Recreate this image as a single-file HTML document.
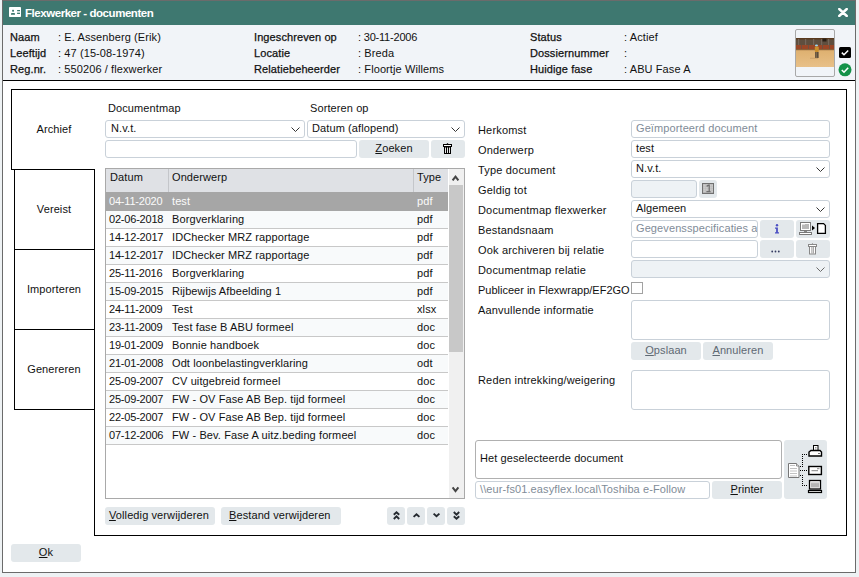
<!DOCTYPE html>
<html><head><meta charset="utf-8">
<style>
*{box-sizing:border-box;margin:0;padding:0}
html,body{width:859px;height:577px;overflow:hidden;background:#eef2f4;font-family:"Liberation Sans",sans-serif;font-size:11px;color:#111;letter-spacing:0.1px}
.a{position:absolute}
.t{position:absolute;line-height:13px;white-space:nowrap}
.m{-webkit-text-stroke:0.25px #111}
.bl{position:absolute;background:#000}
.inp{position:absolute;background:#fff;border:1px solid #c9d1d9;border-radius:3px}
.dis{background:#eef2f5}
.btn{position:absolute;background:#e3e8eb;border-radius:3px}
.u{text-decoration:underline;text-underline-offset:1px}
.row{position:absolute;left:106px;width:342px;height:18px;border-bottom:1px solid #c8c8c8}
.row.o{background:#f8fafb}
.row.sel{background:#a6a6a6;color:#fbfbfb;border-bottom:none;height:19px}
.row.sel span{top:3px}
.row span{position:absolute;top:2px;line-height:13px;white-space:nowrap}
.d{left:3px;letter-spacing:-0.2px}
.s{left:66px}
.ty{left:311px}
.lab{position:absolute;left:478px;letter-spacing:0.18px;line-height:13px;white-space:nowrap}
</style></head><body>
<!-- window -->
<div class="a" style="left:2px;top:0;width:854px;height:573px;background:#fff;border:1px solid #6b6b6b;border-width:1px 1px 1px 1px"></div>
<!-- title bar -->
<div class="a" style="left:3px;top:1px;width:852px;height:24px;background:#3e7870"></div>
<svg class="a" style="left:9px;top:7px" width="12" height="10" viewBox="0 0 12 10">
<rect x="0" y="0" width="12" height="10" rx="0.8" fill="#fff"/>
<rect x="3.1" y="2.8" width="1.9" height="1.9" rx="0.6" fill="#3e7870"/>
<path d="M2 7.8 V6.9 Q2 6.1 2.8 6.1 H5.2 Q6 6.1 6 6.9 V7.8 Z" fill="#3e7870"/>
<rect x="8.1" y="3" width="2.9" height="1" fill="#3e7870"/>
<rect x="8.1" y="4.5" width="2.9" height="1.2" fill="#3e7870" opacity=".45"/>
<rect x="8.1" y="6" width="2.9" height="1" fill="#3e7870"/>
</svg>
<div class="t" style="left:25px;top:7px;color:#fff;font-weight:bold;font-size:11.5px;letter-spacing:-0.45px">Flexwerker - documenten</div>
<svg class="a" style="left:838px;top:8px" width="10" height="9" viewBox="0 0 10 9">
<path d="M1.2 1 L8.8 8 M8.8 1 L1.2 8" stroke="#fff" stroke-width="2.4" stroke-linecap="round"/>
</svg>
<!-- header -->
<div class="a" style="left:3px;top:25px;width:852px;height:55px;background:#f1f4f8"></div>
<div class="bl" style="left:3px;top:80px;width:852px;height:1px"></div>

<div class="t m" style="left:10px;top:31px">Naam</div>
<div class="t m" style="left:10px;top:47px">Leeftijd</div>
<div class="t m" style="left:10px;top:63px">Reg.nr.</div>
<div class="t" style="left:58px;top:31px">: E. Assenberg (Erik)</div>
<div class="t" style="left:58px;top:47px">: 47 (15-08-1974)</div>
<div class="t" style="left:58px;top:63px">: 550206 / flexwerker</div>

<div class="t m" style="left:254px;top:31px">Ingeschreven op</div>
<div class="t m" style="left:254px;top:47px">Locatie</div>
<div class="t m" style="left:254px;top:63px">Relatiebeheerder</div>
<div class="t" style="left:358px;top:31px;letter-spacing:-0.2px">: 30-11-2006</div>
<div class="t" style="left:358px;top:47px">: Breda</div>
<div class="t" style="left:358px;top:63px">: Floortje Willems</div>

<div class="t m" style="left:530px;top:31px">Status</div>
<div class="t m" style="left:530px;top:47px">Dossiernummer</div>
<div class="t m" style="left:530px;top:63px">Huidige fase</div>
<div class="t" style="left:624px;top:31px">: Actief</div>
<div class="t" style="left:624px;top:47px">:</div>
<div class="t" style="left:624px;top:63px">: ABU Fase A</div>

<!-- photo -->
<div class="a" style="left:795px;top:29px;width:40px;height:48px;border:1px solid #a8a8a8;border-radius:2px;background:#f1f4f8"></div>
<svg class="a" style="left:796px;top:38px" width="38" height="29" viewBox="0 0 38 29">
<defs><linearGradient id="fl" x1="0" y1="0" x2="0" y2="1"><stop offset="0" stop-color="#d6a55e"/><stop offset="1" stop-color="#e8c088"/></linearGradient></defs>
<rect width="38" height="29" fill="url(#fl)"/>
<rect width="38" height="12" fill="#5f4e3e"/>
<rect y="0" width="38" height="1.5" fill="#5a3a1e"/>
<rect x="2" y="1" width="1.2" height="7" fill="#75665a"/>
<rect x="9" y="1" width="1.2" height="7" fill="#75665a"/>
<rect x="17" y="1" width="1.2" height="7" fill="#75665a"/>
<rect x="25" y="1" width="1.2" height="7" fill="#75665a"/>
<rect x="32" y="1" width="1.2" height="7" fill="#75665a"/>
<rect x="26.5" y="0.5" width="4" height="3" fill="#2a1e14"/>
<rect y="7" width="38" height="4" fill="#9a4626"/>
<rect x="5" y="7" width="1" height="4" fill="#6e5040"/>
<rect x="12" y="7" width="1" height="4" fill="#6e5040"/>
<rect x="19" y="7" width="1" height="4" fill="#6e5040"/>
<rect x="26" y="7" width="1" height="4" fill="#6e5040"/>
<rect x="33" y="7" width="1" height="4" fill="#6e5040"/>
<rect y="11" width="38" height="1.2" fill="#8a6038"/>
<ellipse cx="20.5" cy="7.5" rx="1.5" ry="1" fill="#9fd6f0"/>
<rect x="18.8" y="8.5" width="4" height="5.5" rx="1" fill="#c98e2e"/>
<rect x="19.3" y="14" width="1.3" height="6" fill="#3a332c"/>
<rect x="21.2" y="14" width="1.3" height="6" fill="#3a332c"/>
<rect x="14" y="19.8" width="8" height="0.8" fill="#b08a58" opacity=".6"/>
</svg>
<svg class="a" style="left:839px;top:47px" width="12" height="11" viewBox="0 0 12 11">
<rect width="12" height="11" rx="1.5" fill="#000"/>
<path d="M2.8 5.6 L5 7.8 L9.2 3.4" stroke="#fff" stroke-width="1.5" fill="none"/>
</svg>
<svg class="a" style="left:838px;top:63px" width="14" height="14" viewBox="0 0 14 14">
<circle cx="7" cy="6.8" r="6.5" fill="#149249"/>
<path d="M3.8 7 L6 9.2 L10.2 4.8" stroke="#fff" stroke-width="1.6" fill="none"/>
</svg>

<!-- tab panel -->
<div class="bl" style="left:11px;top:89px;width:836px;height:1px"></div>
<div class="bl" style="left:846px;top:89px;width:1px;height:447px"></div>
<div class="bl" style="left:94px;top:535px;width:753px;height:1px"></div>
<div class="bl" style="left:94px;top:409px;width:1px;height:127px"></div>
<div class="bl" style="left:11px;top:89px;width:1px;height:81px"></div>
<div class="bl" style="left:11px;top:169px;width:84px;height:1px"></div>
<div class="a" style="left:14px;top:169px;width:81px;height:81px;border:1px solid #000"></div>
<div class="a" style="left:14px;top:249px;width:81px;height:81px;border:1px solid #000"></div>
<div class="a" style="left:14px;top:329px;width:81px;height:81px;border:1px solid #000"></div>
<div class="t" style="left:14px;width:80px;text-align:center;top:123px">Archief</div>
<div class="t" style="left:14px;width:80px;text-align:center;top:203px">Vereist</div>
<div class="t" style="left:14px;width:80px;text-align:center;top:283px">Importeren</div>
<div class="t" style="left:14px;width:80px;text-align:center;top:363px">Genereren</div>

<!-- left content -->
<div class="t" style="left:108px;top:102px">Documentmap</div>
<div class="t" style="left:310px;top:102px">Sorteren op</div>
<div class="inp" style="left:105px;top:120px;width:200px;height:18px"></div>
<div class="t" style="left:111px;top:122px">N.v.t.</div>
<svg class="a" style="left:291px;top:127px" width="9" height="5" viewBox="0 0 9 5"><path d="M0.5 0.5 L4.5 4.5 L8.5 0.5" stroke="#333" stroke-width="1" fill="none"/></svg>
<div class="inp" style="left:307px;top:120px;width:158px;height:18px"></div>
<div class="t" style="left:312px;top:122px">Datum (aflopend)</div>
<svg class="a" style="left:451px;top:127px" width="9" height="5" viewBox="0 0 9 5"><path d="M0.5 0.5 L4.5 4.5 L8.5 0.5" stroke="#333" stroke-width="1" fill="none"/></svg>
<div class="inp" style="left:105px;top:140px;width:252px;height:18px"></div>
<div class="btn" style="left:359px;top:140px;width:70px;height:18px"></div>
<div class="t" style="left:359px;width:70px;text-align:center;top:142px"><span class="u">Z</span>oeken</div>
<div class="btn" style="left:431px;top:140px;width:34px;height:18px"></div>
<svg class="a" style="left:443px;top:143px" width="9" height="11" viewBox="0 0 9 11">
<path d="M3.5 1 L4.5 0 L5.5 1 Z" fill="#000"/>
<rect x="0" y="1" width="9" height="3" fill="#000"/>
<rect x="1" y="2" width="7" height="1" fill="#fff"/>
<rect x="1" y="4" width="7" height="7" fill="#000"/>
<rect x="2" y="4.5" width="0.9" height="5.5" fill="#fff"/>
<rect x="4" y="4.5" width="0.9" height="5.5" fill="#fff"/>
<rect x="6" y="4.5" width="0.9" height="5.5" fill="#fff"/>
</svg>

<!-- table -->
<div class="a" style="left:105px;top:168px;width:360px;height:331px;border:1px solid #a9a9a9;background:#fff"></div>
<div class="a" style="left:106px;top:169px;width:342px;height:23px;background:#dfe1e5"></div>
<div class="a" style="left:168px;top:169px;width:1px;height:23px;background:#c4c6ca"></div>
<div class="a" style="left:413px;top:169px;width:1px;height:23px;background:#c4c6ca"></div>
<div class="t" style="left:110px;top:171px">Datum</div>
<div class="t" style="left:172px;top:171px">Onderwerp</div>
<div class="t" style="left:417px;top:171px">Type</div>
<!-- scrollbar -->
<div class="a" style="left:449px;top:169px;width:15px;height:329px;background:#f0f0f0"></div>
<div class="a" style="left:449px;top:185px;width:14px;height:167px;background:#c8c8c8"></div>
<svg class="a" style="left:451px;top:174px" width="9" height="8" viewBox="0 0 9 8"><path d="M1.6 6.4 L4.5 2.6 L7.4 6.4" stroke="#444" stroke-width="2" fill="none"/></svg>
<svg class="a" style="left:451px;top:486px" width="9" height="8" viewBox="0 0 9 8"><path d="M1.6 1.4 L4.5 5.2 L7.4 1.4" stroke="#444" stroke-width="2" fill="none"/></svg>

<div class="row sel" style="top:192px"><span class="d">04-11-2020</span><span class="s">test</span><span class="ty">pdf</span></div>
<div class="row o" style="top:211px"><span class="d">02-06-2018</span><span class="s">Borgverklaring</span><span class="ty">pdf</span></div>
<div class="row" style="top:229px"><span class="d">14-12-2017</span><span class="s">IDChecker MRZ rapportage</span><span class="ty">pdf</span></div>
<div class="row o" style="top:247px"><span class="d">14-12-2017</span><span class="s">IDChecker MRZ rapportage</span><span class="ty">pdf</span></div>
<div class="row" style="top:265px"><span class="d">25-11-2016</span><span class="s">Borgverklaring</span><span class="ty">pdf</span></div>
<div class="row o" style="top:283px"><span class="d">15-09-2015</span><span class="s">Rijbewijs Afbeelding 1</span><span class="ty">pdf</span></div>
<div class="row" style="top:301px"><span class="d">24-11-2009</span><span class="s">Test</span><span class="ty">xlsx</span></div>
<div class="row o" style="top:319px"><span class="d">23-11-2009</span><span class="s">Test fase B ABU formeel</span><span class="ty">doc</span></div>
<div class="row" style="top:337px"><span class="d">19-01-2009</span><span class="s">Bonnie handboek</span><span class="ty">doc</span></div>
<div class="row o" style="top:355px"><span class="d">21-01-2008</span><span class="s">Odt loonbelastingverklaring</span><span class="ty">odt</span></div>
<div class="row" style="top:373px"><span class="d">25-09-2007</span><span class="s">CV uitgebreid formeel</span><span class="ty">doc</span></div>
<div class="row o" style="top:391px"><span class="d">25-09-2007</span><span class="s">FW - OV Fase AB Bep. tijd formeel</span><span class="ty">doc</span></div>
<div class="row" style="top:409px"><span class="d">22-05-2007</span><span class="s">FW - OV Fase AB Bep. tijd formeel</span><span class="ty">doc</span></div>
<div class="row o" style="top:427px"><span class="d">07-12-2006</span><span class="s">FW - Bev. Fase A uitz.beding formeel</span><span class="ty">doc</span></div>

<!-- bottom buttons -->
<div class="btn" style="left:105px;top:507px;width:110px;height:18px"></div>
<div class="t" style="left:109px;top:509px"><span class="u">V</span>olledig verwijderen</div>
<div class="btn" style="left:221px;top:507px;width:120px;height:18px"></div>
<div class="t" style="left:229px;top:509px"><span class="u">B</span>estand verwijderen</div>
<div class="btn" style="left:387px;top:507px;width:18px;height:18px"></div>
<div class="btn" style="left:407px;top:507px;width:18px;height:18px"></div>
<div class="btn" style="left:427px;top:507px;width:18px;height:18px"></div>
<div class="btn" style="left:447px;top:507px;width:18px;height:18px"></div>
<svg class="a" style="left:392px;top:510px" width="9" height="11" viewBox="0 0 9 11"><path d="M1.8 4.8 L4.5 2.2 L7.2 4.8 M1.8 9 L4.5 6.4 L7.2 9" stroke="#252a30" stroke-width="1.9" fill="none"/></svg>
<svg class="a" style="left:412px;top:512px" width="9" height="7" viewBox="0 0 9 7"><path d="M1.6 4.9 L4.5 2.2 L7.4 4.9" stroke="#252a30" stroke-width="1.9" fill="none"/></svg>
<svg class="a" style="left:432px;top:512px" width="9" height="7" viewBox="0 0 9 7"><path d="M1.6 1.6 L4.5 4.3 L7.4 1.6" stroke="#252a30" stroke-width="1.9" fill="none"/></svg>
<svg class="a" style="left:452px;top:510px" width="9" height="11" viewBox="0 0 9 11"><path d="M1.8 2 L4.5 4.6 L7.2 2 M1.8 6.2 L4.5 8.8 L7.2 6.2" stroke="#252a30" stroke-width="1.9" fill="none"/></svg>

<!-- right form labels -->
<div class="lab" style="top:124px">Herkomst</div>
<div class="lab" style="top:144px">Onderwerp</div>
<div class="lab" style="top:164px">Type document</div>
<div class="lab" style="top:184px">Geldig tot</div>
<div class="lab" style="top:204px">Documentmap flexwerker</div>
<div class="lab" style="top:224px">Bestandsnaam</div>
<div class="lab" style="top:244px">Ook archiveren bij relatie</div>
<div class="lab" style="top:264px">Documentmap relatie</div>
<div class="lab" style="top:284px;letter-spacing:0">Publiceer in Flexwrapp/EF2GO</div>
<div class="lab" style="top:304px">Aanvullende informatie</div>
<div class="lab" style="top:374px">Reden intrekking/weigering</div>

<!-- right form inputs -->
<div class="inp" style="left:631px;top:120px;width:199px;height:18px"></div>
<div class="t" style="left:636px;top:122px;color:#7f8c98">Geïmporteerd document</div>
<div class="inp" style="left:631px;top:140px;width:199px;height:18px"></div>
<div class="t" style="left:636px;top:142px">test</div>
<div class="inp" style="left:631px;top:160px;width:199px;height:18px"></div>
<div class="t" style="left:636px;top:162px">N.v.t.</div>
<svg class="a" style="left:816px;top:167px" width="9" height="5" viewBox="0 0 9 5"><path d="M0.5 0.5 L4.5 4.5 L8.5 0.5" stroke="#333" stroke-width="1" fill="none"/></svg>
<div class="inp dis" style="left:631px;top:180px;width:66px;height:18px"></div>
<div class="btn" style="left:699px;top:180px;width:18px;height:18px"></div>
<svg class="a" style="left:702px;top:183px" width="12" height="11" viewBox="0 0 12 11">
<rect x="0.5" y="0.5" width="11" height="10" fill="#b4b4b4" stroke="#707070" stroke-width="1"/>
<rect x="1.6" y="1.6" width="1" height="1" fill="#fff" opacity=".85"/><rect x="3.6" y="1.6" width="1" height="1" fill="#fff" opacity=".85"/><rect x="5.6" y="1.6" width="1" height="1" fill="#fff" opacity=".85"/><rect x="7.6" y="1.6" width="1" height="1" fill="#fff" opacity=".85"/><rect x="9.6" y="1.6" width="1" height="1" fill="#fff" opacity=".85"/><rect x="1.6" y="3.6" width="1" height="1" fill="#fff" opacity=".85"/><rect x="3.6" y="3.6" width="1" height="1" fill="#fff" opacity=".85"/><rect x="5.6" y="3.6" width="1" height="1" fill="#fff" opacity=".85"/><rect x="7.6" y="3.6" width="1" height="1" fill="#fff" opacity=".85"/><rect x="9.6" y="3.6" width="1" height="1" fill="#fff" opacity=".85"/><rect x="1.6" y="5.6" width="1" height="1" fill="#fff" opacity=".85"/><rect x="3.6" y="5.6" width="1" height="1" fill="#fff" opacity=".85"/><rect x="5.6" y="5.6" width="1" height="1" fill="#fff" opacity=".85"/><rect x="7.6" y="5.6" width="1" height="1" fill="#fff" opacity=".85"/><rect x="9.6" y="5.6" width="1" height="1" fill="#fff" opacity=".85"/><rect x="1.6" y="7.6" width="1" height="1" fill="#fff" opacity=".85"/><rect x="3.6" y="7.6" width="1" height="1" fill="#fff" opacity=".85"/><rect x="5.6" y="7.6" width="1" height="1" fill="#fff" opacity=".85"/><rect x="7.6" y="7.6" width="1" height="1" fill="#fff" opacity=".85"/><rect x="9.6" y="7.6" width="1" height="1" fill="#fff" opacity=".85"/>
<path d="M4.6 3.4 L6.4 2.2 H7.2 V8.4 M4.4 8.7 H8.6" stroke="#707070" stroke-width="1.3" fill="none"/>
</svg>
<div class="inp" style="left:631px;top:200px;width:199px;height:18px"></div>
<div class="t" style="left:636px;top:202px">Algemeen</div>
<svg class="a" style="left:816px;top:207px" width="9" height="5" viewBox="0 0 9 5"><path d="M0.5 0.5 L4.5 4.5 L8.5 0.5" stroke="#333" stroke-width="1" fill="none"/></svg>
<div class="inp" style="left:631px;top:220px;width:127px;height:18px;overflow:hidden"><div class="t" style="left:4px;top:1px;color:#7f8c98">Gegevensspecificaties a</div></div>
<div class="btn" style="left:760px;top:220px;width:34px;height:18px"></div>
<svg class="a" style="left:774px;top:224px" width="6" height="10" viewBox="0 0 6 10"><circle cx="3" cy="1.3" r="1.2" fill="#4b4fc4"/><path d="M1 3.6 H3.9 V8.2 H5 V9.4 H1 V8.2 H2.1 V4.8 H1 Z" fill="#4b4fc4"/></svg>
<div class="btn" style="left:796px;top:220px;width:34px;height:18px"></div>
<svg class="a" style="left:799px;top:222px" width="28" height="13" viewBox="0 0 28 13">
<rect x="1.5" y="0.5" width="10" height="8" fill="#fff" stroke="#7a7a7a" stroke-width="1"/>
<rect x="3" y="2" width="7" height="5" fill="#b8b8b8"/>
<rect x="3" y="2" width="3" height="1" fill="#ddd"/>
<rect x="5" y="9" width="3" height="1" fill="#888"/>
<rect x="0.5" y="10.5" width="12" height="2" fill="#fff" stroke="#7a7a7a" stroke-width="1"/>
<path d="M13 3.5 L16 6 L13 8.5 Z" fill="#000"/>
<path d="M18.6 1.6 H24.6 L26.4 3.4 V11.4 H18.6 Z" fill="#fff" stroke="#000" stroke-width="1.3"/>
</svg>
<div class="inp" style="left:631px;top:240px;width:127px;height:18px"></div>
<div class="btn" style="left:760px;top:240px;width:34px;height:18px"></div>
<svg class="a" style="left:771px;top:250px" width="9" height="3" viewBox="0 0 9 3"><circle cx="1.2" cy="1.5" r="0.9" fill="#333a60"/><circle cx="4.5" cy="1.5" r="0.9" fill="#333a60"/><circle cx="7.8" cy="1.5" r="0.9" fill="#333a60"/></svg>
<div class="btn" style="left:796px;top:240px;width:34px;height:18px"></div>
<svg class="a" style="left:808px;top:243px" width="9" height="12" viewBox="0 0 9 12">
<path d="M3.8 1 L4.5 0 L5.2 1 Z" fill="#888"/>
<rect x="0.5" y="1.5" width="8" height="2" fill="#fff" stroke="#888" stroke-width="1"/>
<rect x="1.5" y="3.5" width="6" height="7.5" fill="#fff" stroke="#888" stroke-width="1"/>
<rect x="3.5" y="4" width="0.8" height="6.5" fill="#888"/>
<rect x="4.9" y="4" width="0.8" height="6.5" fill="#888"/>
</svg>
<div class="inp dis" style="left:631px;top:260px;width:199px;height:18px"></div>
<svg class="a" style="left:816px;top:267px" width="9" height="5" viewBox="0 0 9 5"><path d="M0.5 0.5 L4.5 4.5 L8.5 0.5" stroke="#6a6a6a" stroke-width="1" fill="none"/></svg>
<div class="a" style="left:631px;top:282px;width:12px;height:12px;border:1px solid #a2a2a2;background:#fff"></div>

<div class="inp" style="left:631px;top:300px;width:199px;height:40px"></div>
<div class="btn" style="left:631px;top:342px;width:70px;height:18px"></div>
<div class="t" style="left:631px;width:70px;text-align:center;top:344px;color:#5f6973"><span class="u">O</span>pslaan</div>
<div class="btn" style="left:703px;top:342px;width:70px;height:18px"></div>
<div class="t" style="left:703px;width:70px;text-align:center;top:344px;color:#5f6973"><span class="u">A</span>nnuleren</div>
<div class="inp" style="left:631px;top:370px;width:199px;height:40px"></div>

<!-- bottom right -->
<div class="a" style="left:475px;top:440px;width:307px;height:39px;border:1px solid #b0b0b0;border-radius:3px;background:#fff"></div>
<div class="t" style="left:480px;top:452px">Het geselecteerde document</div>
<div class="inp" style="left:475px;top:481px;width:235px;height:18px"></div>
<div class="t" style="left:480px;top:483px;color:#7f8c98">\\eur-fs01.easyflex.local\Toshiba e-Follow</div>
<div class="btn" style="left:712px;top:481px;width:70px;height:18px"></div>
<div class="t" style="left:712px;width:70px;text-align:center;top:483px"><span class="u">P</span>rinter</div>
<div class="btn" style="left:784px;top:440px;width:43px;height:59px"></div>
<svg class="a" style="left:784px;top:440px" width="44" height="60" viewBox="0 0 44 60">
<path d="M4.5 23.5 H12.5 L15 26 V37.5 H4.5 Z" fill="#fff" stroke="#777" stroke-width="1"/>
<path d="M12.5 23.5 V26 H15" fill="#eee" stroke="#777" stroke-width="0.8"/>
<path d="M6 25.5 H11 M6 28.5 H13 M6 31 H13 M6 33.5 H13 M6 36 H13" stroke="#bbb" stroke-width="0.9"/>
<g fill="#000">
<rect x="18" y="14" width="1" height="1"/><rect x="18" y="16" width="1" height="1"/><rect x="18" y="18" width="1" height="1"/><rect x="18" y="20" width="1" height="1"/><rect x="18" y="22" width="1" height="1"/><rect x="18" y="24" width="1" height="1"/><rect x="18" y="26" width="1" height="1"/>
<rect x="20" y="14" width="1" height="1"/><rect x="22" y="14" width="1" height="1"/>
<rect x="16" y="26" width="1" height="1"/>
<rect x="16" y="30" width="1" height="1"/><rect x="18" y="30" width="1" height="1"/><rect x="20" y="30" width="1" height="1"/><rect x="22" y="30" width="1" height="1"/>
<rect x="16" y="35" width="1" height="1"/>
<rect x="18" y="35" width="1" height="1"/><rect x="18" y="37" width="1" height="1"/><rect x="18" y="39" width="1" height="1"/><rect x="18" y="41" width="1" height="1"/><rect x="18" y="43" width="1" height="1"/><rect x="18" y="45" width="1" height="1"/>
<rect x="20" y="45" width="1" height="1"/><rect x="22" y="45" width="1" height="1"/>
</g>
<rect x="29.5" y="5.5" width="4.5" height="5" fill="#fff" stroke="#000" stroke-width="1"/>
<path d="M31 7.5 H32.5 M31 9 H32.5" stroke="#777" stroke-width="0.7"/>
<path d="M27 10.5 H36 L37.5 12 V16 H25 V12 Z" fill="#fff" stroke="#000" stroke-width="1.4"/>
<path d="M34 13.5 H36" stroke="#555" stroke-width="0.8"/>
<rect x="24.8" y="26.5" width="12.6" height="8" fill="#fff" stroke="#000" stroke-width="1.4"/>
<path d="M33 28.7 H35.5" stroke="#666" stroke-width="0.8"/>
<path d="M27.5 30.7 H34" stroke="#777" stroke-width="0.9"/>
<rect x="25.5" y="40.5" width="11" height="8.5" fill="#fff" stroke="#000" stroke-width="1.3"/>
<rect x="27" y="42" width="8" height="5.5" fill="#b5b5b5"/>
<rect x="27" y="42" width="8" height="1.2" fill="#d8d8d8"/>
<rect x="24.5" y="50.5" width="13" height="2" fill="#fff" stroke="#000" stroke-width="1.2"/>
</svg>

<!-- ok -->
<div class="btn" style="left:11px;top:544px;width:70px;height:18px"></div>
<div class="t" style="left:11px;width:70px;text-align:center;top:546px"><span class="u">O</span>k</div>
</body></html>
